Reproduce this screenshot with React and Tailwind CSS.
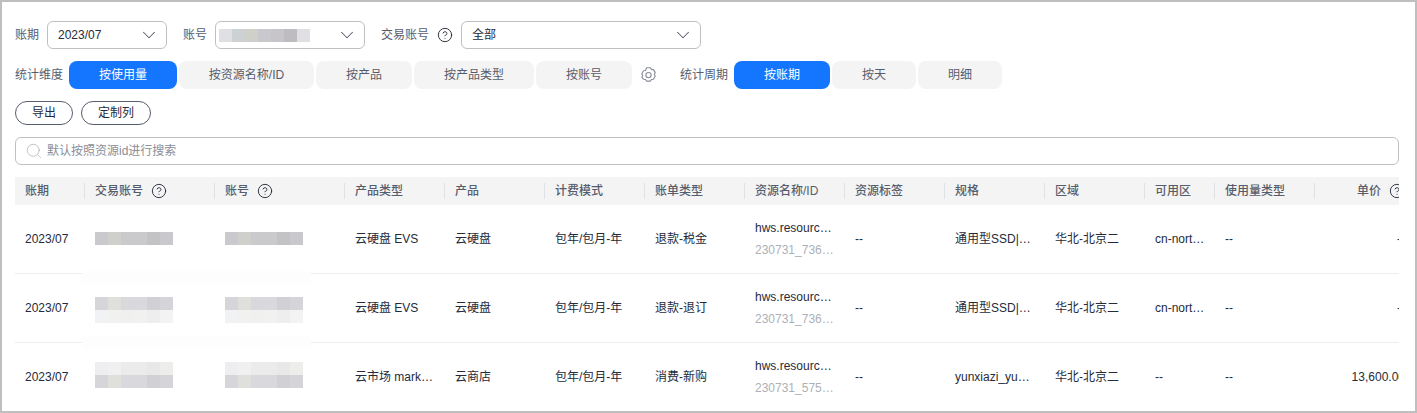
import { ChevronDown, CircleHelp, Search } from "lucide-react";

const FONT = "font-['Liberation_Sans','Noto_Sans_CJK_SC',sans-serif]";

const DIMENSIONS = [
  { label: "按使用量", width: "w-[108px]", active: true },
  { label: "按资源名称/ID", width: "w-[135px]" },
  { label: "按产品", width: "w-[96px]" },
  { label: "按产品类型", width: "w-[120px]" },
  { label: "按账号", width: "w-[96px]" },
];

const PERIODS = [
  { label: "按账期", width: "w-[96px]", active: true },
  { label: "按天", width: "w-[84px]" },
  { label: "明细", width: "w-[84px]" },
];

const COLUMNS = [
  { label: "账期", width: "w-[70px]" },
  { label: "交易账号", width: "w-[130px]", help: true },
  { label: "账号", width: "w-[130px]", help: true },
  { label: "产品类型", width: "w-[100px]" },
  { label: "产品", width: "w-[100px]" },
  { label: "计费模式", width: "w-[100px]" },
  { label: "账单类型", width: "w-[100px]" },
  { label: "资源名称/ID", width: "w-[100px]" },
  { label: "资源标签", width: "w-[100px]" },
  { label: "规格", width: "w-[100px]" },
  { label: "区域", width: "w-[100px]" },
  { label: "可用区", width: "w-[70px]" },
  { label: "使用量类型", width: "w-[100px]" },
  { label: "单价", width: "w-[100px]", help: true, right: true },
];

const DARK_A = ["bg-[#cacace]", "bg-[#cfcfcb]", "bg-[#cacacd]", "bg-[#cacacc]", "bg-[#c3c3c6]", "bg-[#c9c8cc]"];
const DARK_B = ["bg-[#d6d6da]", "bg-[#dfe0dc]", "bg-[#d9d8dc]", "bg-[#d9d8dc]", "bg-[#d1d1d5]", "bg-[#d5d4d9]"];
const LIGHT_A = ["bg-[#f1f2f4]", "bg-[#f1f1ef]", "bg-[#f0f0f0]", "bg-[#f1f1f0]", "bg-[#eeeeee]", "bg-[#f3f3f3]"];
const LIGHT_B = ["bg-[#eeeef0]", "bg-[#f0f0f1]", "bg-[#ebebeb]", "bg-[#ebebeb]", "bg-[#e8e8e9]", "bg-[#ededec]"];
const ACCOUNT_MOSAIC = ["bg-[#e0dfe3]", "bg-[#ccd2d2]", "bg-[#d0d0cb]", "bg-[#c9c8cc]", "bg-[#c7c5c9]", "bg-[#bfbcc0]", "bg-[#e0dfe3]"];

const ROWS = [
  { type: "云硬盘 EVS", product: "云硬盘", bill: "退款-税金", id: "230731_736…", spec: "通用型SSD|…", zone: "cn-nort…", price: "--", mosaic: [DARK_A], shift: "pb-px" },
  { type: "云硬盘 EVS", product: "云硬盘", bill: "退款-退订", id: "230731_736…", spec: "通用型SSD|…", zone: "cn-nort…", price: "--", mosaic: [DARK_B, LIGHT_A], shift: "pt-1" },
  { type: "云市场 mark…", product: "云商店", bill: "消费-新购", id: "230731_575…", spec: "yunxiazi_yu…", zone: "--", price: "13,600.00", mosaic: [LIGHT_B, DARK_B], shift: "pb-1" },
];

const CELL = "border-b border-[#eeeeee] px-[10px]";

function Mosaic({ rows, className }) {
  return (
    <div className={`flex flex-col ${className}`}>
      {rows.map((colors, i) => (
        <div key={i} className="flex">
          {colors.map((color, j) => (
            <span key={j} className={`h-[13px] w-[13px] ${color}`} />
          ))}
        </div>
      ))}
    </div>
  );
}

function HelpIcon() {
  return <CircleHelp size={16} strokeWidth={1.4} className="shrink-0 text-[#252b3a]" />;
}

function Select({ width, children }) {
  return (
    <div className={`flex h-7 items-center justify-between rounded-md border border-[#c0c0c0] bg-white pr-[6px] ${width}`}>
      {children}
      <ChevronDown size={22} strokeWidth={1.1} className="shrink-0 text-[#575d6c]" />
    </div>
  );
}

function TabGroup({ items, gap }) {
  return (
    <div className={`flex ${gap}`}>
      {items.map((item) => (
        <div
          key={item.label}
          className={`flex h-7 items-center justify-center rounded-lg ${item.width} ${item.active ? "bg-[#1476ff] text-white" : "bg-[#f4f4f4] text-[#575d6c]"}`}
        >
          {item.label}
        </div>
      ))}
    </div>
  );
}

function GearIcon() {
  return (
    <svg width="15" height="16" viewBox="0.5 0.5 13 14" fill="none" stroke="#8a8e99" strokeWidth="1">
      <path d="M5.3 1.2h3.4l.9 1.4 1.7.2 1.6 2.6-.8 1.6.8 1.6-1.6 2.6-1.7.2-.9 1.4H5.3l-.9-1.4-1.7-.2L1.1 9.6l.8-1.6-.8-1.6 1.6-2.6 1.7-.2z" strokeLinejoin="round" />
      <circle cx="7" cy="7.6" r="2.3" />
    </svg>
  );
}

export default function App() {
  return (
    <div className={`h-[413px] w-[1417px] overflow-hidden border-2 border-[#bfbfbf] bg-white pl-[13px] pr-4 pt-[19px] text-xs text-[#252b3a] ${FONT}`}>
      <div className="flex items-center">
        <span className="mr-2 text-[#575d6c]">账期</span>
        <Select width="w-[120px]">
          <span className="pl-[10px]">2023/07</span>
        </Select>
        <span className="ml-4 mr-2 text-[#575d6c]">账号</span>
        <Select width="w-[150px]">
          <span className="pl-[3px]">
            <span className="flex">
              {ACCOUNT_MOSAIC.map((color, i) => (
                <span key={i} className={`h-[13px] w-[13px] ${color}`} />
              ))}
            </span>
          </span>
        </Select>
        <span className="ml-4 text-[#575d6c]">交易账号</span>
        <span className="ml-2 mr-2"><HelpIcon /></span>
        <Select width="w-[240px]">
          <span className="pl-[10px]">全部</span>
        </Select>
      </div>

      <div className="mt-3 flex items-center">
        <span className="mr-[6px] text-[#575d6c]">统计维度</span>
        <TabGroup items={DIMENSIONS} gap="gap-[2px]" />
        <span className="-mt-px ml-[9px]"><GearIcon /></span>
        <span className="ml-[24px] mr-[6px] text-[#575d6c]">统计周期</span>
        <TabGroup items={PERIODS} gap="gap-[2px]" />
      </div>

      <div className="mt-3 flex gap-2">
        <button type="button" className="h-6 w-[58px] rounded-full border border-[#575d6c]">导出</button>
        <button type="button" className="h-6 w-[70px] rounded-full border border-[#575d6c]">定制列</button>
      </div>

      <div className="mt-3 flex h-7 items-center rounded-md border border-[#c0c0c0] pl-[9px]">
        <Search size={18} strokeWidth={1} className="text-[#adb0b8]" />
        <span className="ml-1 text-[#8a8e99]">默认按照资源id进行搜索</span>
      </div>

      <div className="relative mt-3 overflow-hidden">
        <table className="w-[1400px] table-fixed border-separate border-spacing-0">
          <colgroup>
            {COLUMNS.map((col) => (
              <col key={col.label} className={col.width} />
            ))}
          </colgroup>
          <thead>
            <tr className="h-7 bg-[#f4f4f4] text-[#575d6c]">
              {COLUMNS.map((col, i) => (
                <th key={col.label} className="p-0 font-medium">
                  <div className={`flex h-4 items-center px-[10px] ${i > 0 ? "-ml-px border-l border-[#dfe1e6]" : ""} ${col.right ? "justify-end" : ""}`}>
                    <span>{col.label}</span>
                    {col.help && <span className="ml-2"><HelpIcon /></span>}
                  </div>
                </th>
              ))}
            </tr>
          </thead>
          <tbody>
            {ROWS.map((row, i) => (
              <tr key={i} className="h-[69px]">
                <td className={CELL}>2023/07</td>
                <td className={CELL}><Mosaic rows={row.mosaic} className={row.shift} /></td>
                <td className={CELL}><Mosaic rows={row.mosaic} className={row.shift} /></td>
                <td className={`whitespace-nowrap ${CELL}`}>{row.type}</td>
                <td className={CELL}>{row.product}</td>
                <td className={`whitespace-nowrap ${CELL}`}>包年/包月-年</td>
                <td className={CELL}>{row.bill}</td>
                <td className={`whitespace-nowrap ${CELL}`}>
                  <div className="leading-[22px]">hws.resourc…</div>
                  <div className="leading-[22px] text-[#adb0b8]">{row.id}</div>
                </td>
                <td className={CELL}>--</td>
                <td className={`whitespace-nowrap ${CELL}`}>{row.spec}</td>
                <td className={CELL}>华北-北京二</td>
                <td className={`whitespace-nowrap ${CELL}`}>{row.zone}</td>
                <td className={CELL}>--</td>
                <td className={`text-right ${CELL}`}>{row.price}</td>
              </tr>
            ))}
          </tbody>
        </table>
        {/* 打码留下的浅色块，盖住行分隔线 */}
        <div className="absolute left-[67px] top-[94px] h-3 w-[229px] bg-[#fdfdfd]" />
        <div className="absolute left-[67px] top-[159px] h-3 w-[229px] bg-[#fdfdfd]" />
      </div>
    </div>
  );
}
